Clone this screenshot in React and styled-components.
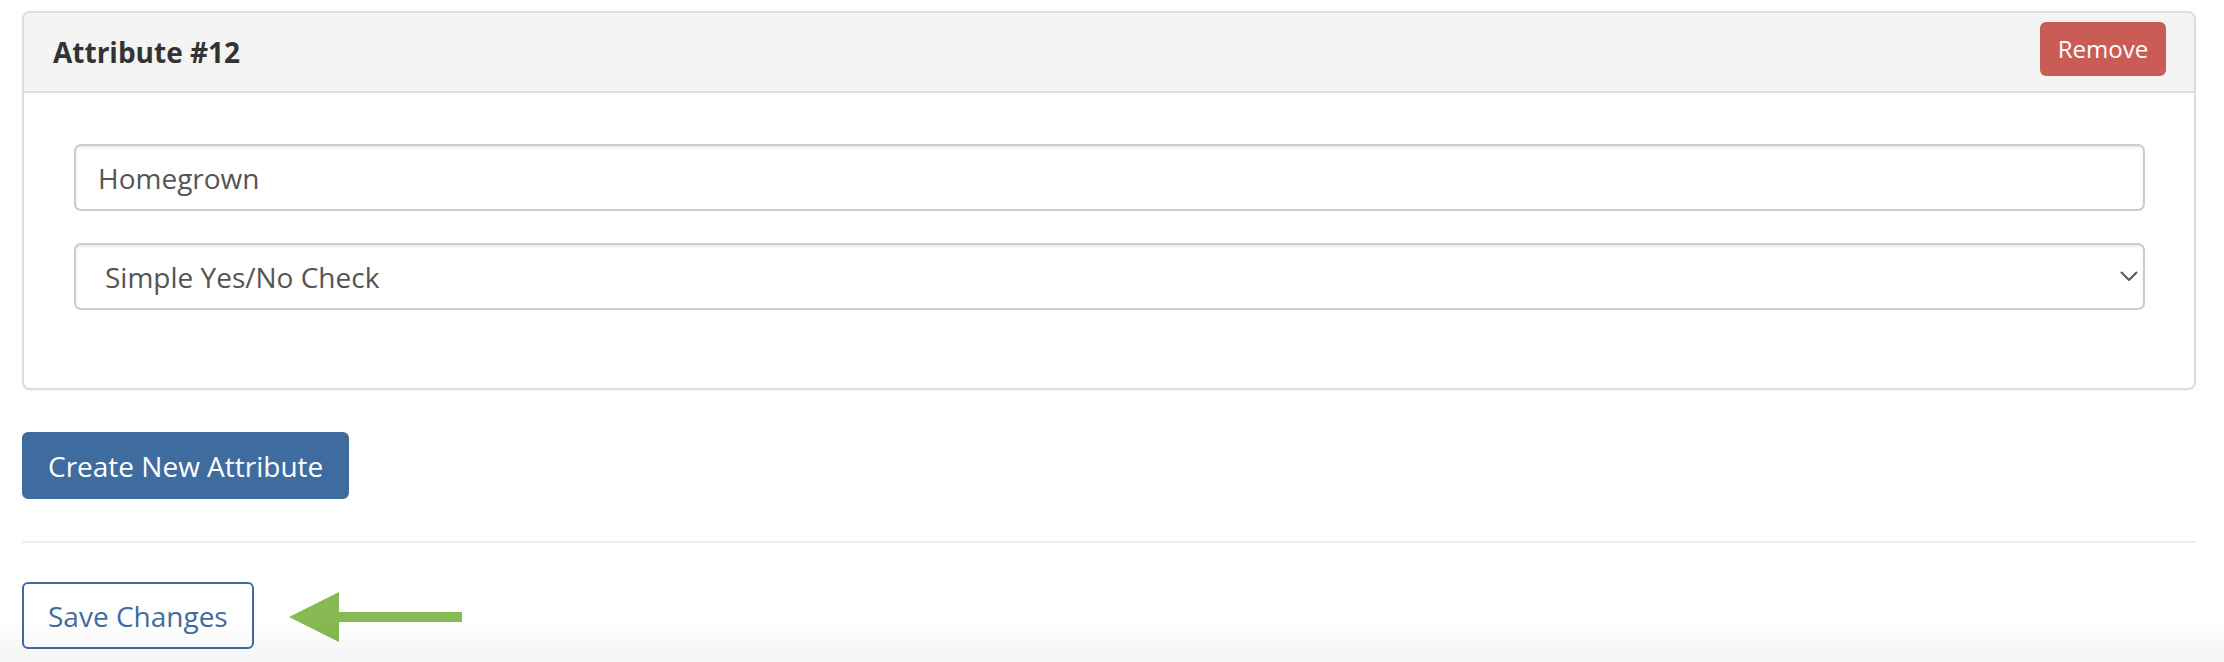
import React from "react";
import styled, { createGlobalStyle } from "styled-components";

const GlobalStyle = createGlobalStyle`
  html, body {
    margin: 0;
    padding: 0;
    background: #ffffff;
  }
  body {
    font-family: "Open Sans", "Liberation Sans", Arial, sans-serif;
    color: #333333;
  }
  * { box-sizing: border-box; }
`;

const Page = styled.div`
  width: 2174px;
  margin-left: 22px;
  padding-top: 11px;
  display: flex;
  flex-direction: column;
`;

const Panel = styled.section`
  border: 2px solid #dddddd;
  border-radius: 8px;
  background: #ffffff;
  box-shadow: 0 1px 2px rgba(0, 0, 0, 0.05);
  overflow: hidden;
`;

const PanelHeader = styled.header`
  height: 80px;
  display: flex;
  align-items: center;
  justify-content: space-between;
  padding: 0 28px 0 29px;
  background: #f4f4f4;
  border-bottom: 2px solid #dddddd;
`;

const PanelTitle = styled.h3`
  margin: 0;
  font-size: 28px;
  font-weight: 700;
  color: #333333;
  line-height: normal;
`;

const Button = styled.button`
  font-family: "Open Sans", "Liberation Sans", Arial, sans-serif;
  height: ${(p) => p.$h || 67}px;
  padding: 0 ${(p) => p.$px || 24}px;
  font-size: ${(p) => p.$fs || 28}px;
  border-radius: 6px;
  border: 2px solid ${(p) => p.$border};
  background: ${(p) => p.$bg};
  color: ${(p) => p.$color};
  cursor: pointer;
  line-height: 1;
  display: inline-flex;
  align-items: center;
  justify-content: center;
  white-space: nowrap;
`;

const RemoveButton = styled(Button)`
  width: 126px;
  margin-bottom: 6px;
`;

const PanelBody = styled.div`
  display: flex;
  flex-direction: column;
  gap: 32px;
  padding: 51px 49px 78px 50px;
`;

const TextInput = styled.input`
  display: block;
  width: 100%;
  height: 67px;
  border: 2px solid #cccccc;
  border-radius: 7px;
  padding: 0 22px;
  font-family: "Open Sans", "Liberation Sans", Arial, sans-serif;
  font-size: 28px;
  color: #555555;
  background: #ffffff;
  box-shadow: inset 0 2px 2px rgba(0, 0, 0, 0.075);
  outline: none;
`;

const SelectWrap = styled.div`
  position: relative;
  width: 100%;
  height: 67px;
`;

const Select = styled.select`
  display: block;
  width: 100%;
  height: 67px;
  border: 2px solid #cccccc;
  border-radius: 7px;
  padding: 0 60px 0 29px;
  font-family: "Open Sans", "Liberation Sans", Arial, sans-serif;
  font-size: 28px;
  color: #555555;
  background: #ffffff;
  box-shadow: inset 0 2px 2px rgba(0, 0, 0, 0.075);
  appearance: none;
  -webkit-appearance: none;
  outline: none;
`;

const Chevron = styled.svg`
  position: absolute;
  right: 7px;
  top: 28px;
  width: 18px;
  height: 10px;
  pointer-events: none;
`;

const Actions = styled.div`
  margin-top: 42px;
  display: flex;
`;

const Divider = styled.hr`
  margin: 42px 0 0;
  border: 0;
  height: 2px;
  background: #eeeeee;
`;

const SaveRow = styled.div`
  margin-top: 39px;
  display: flex;
  align-items: center;
  gap: 35px;
`;

const Arrow = styled.svg`
  width: 173px;
  height: 50px;
  margin-top: 3px;
`;

const BottomFade = styled.div`
  position: fixed;
  left: 0;
  right: 0;
  bottom: 0;
  height: 44px;
  pointer-events: none;
  background: linear-gradient(to bottom, rgba(0, 0, 0, 0), rgba(0, 0, 0, 0.045));
`;

export default function App() {
  return (
    <>
      <GlobalStyle />
      <Page>
        <Panel>
          <PanelHeader>
            <PanelTitle>Attribute #12</PanelTitle>
            <RemoveButton $h={54} $px={0} $fs={24} $bg="#c95d55" $border="#c95d55" $color="#ffffff">
              Remove
            </RemoveButton>
          </PanelHeader>
          <PanelBody>
            <TextInput defaultValue="Homegrown" />
            <SelectWrap>
              <Select defaultValue="yesno">
                <option value="yesno">Simple Yes/No Check</option>
                <option value="text">Text</option>
              </Select>
              <Chevron viewBox="0 0 18 10">
                <path d="M1 1 L9 9 L17 1" fill="none" stroke="#555555" strokeWidth="2" />
              </Chevron>
            </SelectWrap>
          </PanelBody>
        </Panel>
        <Actions>
          <Button $px={24} $bg="#3f6c9f" $border="#3f6c9f" $color="#ffffff">
            Create New Attribute
          </Button>
        </Actions>
        <Divider />
        <SaveRow>
          <Button $px={24} $bg="#ffffff" $border="#3f6c9f" $color="#3f6c9f">
            Save Changes
          </Button>
          <Arrow viewBox="0 0 173 50">
            <polygon points="0,25 50,0 50,50" fill="#87b954" />
            <rect x="49" y="20" width="124" height="10" fill="#87b954" />
          </Arrow>
        </SaveRow>
      </Page>
      <BottomFade />
    </>
  );
}
